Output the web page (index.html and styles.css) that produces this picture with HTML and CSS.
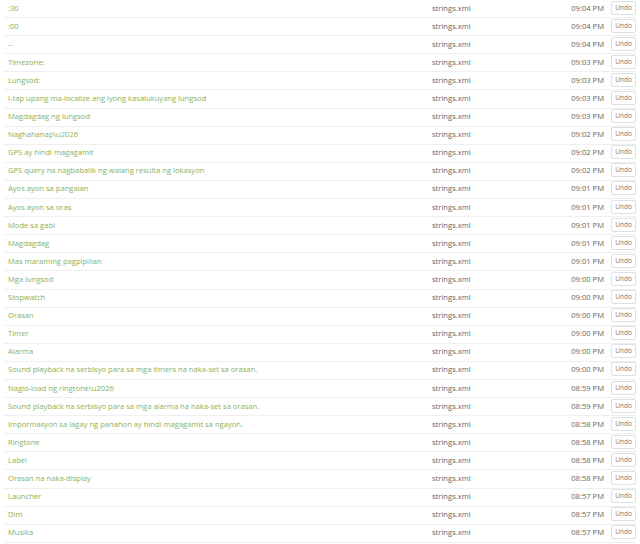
FILE: index.html
```html
<!DOCTYPE html>
<html>
<head lang="en">
    <meta charset="UTF-8">
    <title>History</title>
    <link rel="stylesheet" href="styles.css">
</head>
<body>
<div id="history">
    <div class="row"><span class="name">:30</span><span class="file">strings.xml</span><span class="time">09:04 PM</span><span class="undo">Undo</span></div>
    <div class="row"><span class="name">:00</span><span class="file">strings.xml</span><span class="time">09:04 PM</span><span class="undo">Undo</span></div>
    <div class="row"><span class="name">--</span><span class="file">strings.xml</span><span class="time">09:04 PM</span><span class="undo">Undo</span></div>
    <div class="row"><span class="name">Timezone:</span><span class="file">strings.xml</span><span class="time">09:03 PM</span><span class="undo">Undo</span></div>
    <div class="row"><span class="name">Lungsod:</span><span class="file">strings.xml</span><span class="time">09:03 PM</span><span class="undo">Undo</span></div>
    <div class="row"><span class="name">I-tap upang ma-localize ang iyong kasalukuyang lungsod</span><span class="file">strings.xml</span><span class="time">09:03 PM</span><span class="undo">Undo</span></div>
    <div class="row"><span class="name">Magdagdag ng lungsod</span><span class="file">strings.xml</span><span class="time">09:03 PM</span><span class="undo">Undo</span></div>
    <div class="row"><span class="name">Naghahanap\u2026</span><span class="file">strings.xml</span><span class="time">09:02 PM</span><span class="undo">Undo</span></div>
    <div class="row"><span class="name">GPS ay hindi magagamit</span><span class="file">strings.xml</span><span class="time">09:02 PM</span><span class="undo">Undo</span></div>
    <div class="row"><span class="name">GPS query na nagbabalik ng walang resulta ng lokasyon</span><span class="file">strings.xml</span><span class="time">09:02 PM</span><span class="undo">Undo</span></div>
    <div class="row"><span class="name">Ayos ayon sa pangalan</span><span class="file">strings.xml</span><span class="time">09:01 PM</span><span class="undo">Undo</span></div>
    <div class="row"><span class="name">Ayos ayon sa oras</span><span class="file">strings.xml</span><span class="time">09:01 PM</span><span class="undo">Undo</span></div>
    <div class="row"><span class="name">Mode sa gabi</span><span class="file">strings.xml</span><span class="time">09:01 PM</span><span class="undo">Undo</span></div>
    <div class="row"><span class="name">Magdagdag</span><span class="file">strings.xml</span><span class="time">09:01 PM</span><span class="undo">Undo</span></div>
    <div class="row"><span class="name">Mas maraming pagpipilian</span><span class="file">strings.xml</span><span class="time">09:01 PM</span><span class="undo">Undo</span></div>
    <div class="row"><span class="name">Mga lungsod</span><span class="file">strings.xml</span><span class="time">09:00 PM</span><span class="undo">Undo</span></div>
    <div class="row"><span class="name">Stopwatch</span><span class="file">strings.xml</span><span class="time">09:00 PM</span><span class="undo">Undo</span></div>
    <div class="row"><span class="name">Orasan</span><span class="file">strings.xml</span><span class="time">09:00 PM</span><span class="undo">Undo</span></div>
    <div class="row"><span class="name">Timer</span><span class="file">strings.xml</span><span class="time">09:00 PM</span><span class="undo">Undo</span></div>
    <div class="row"><span class="name">Alarma</span><span class="file">strings.xml</span><span class="time">09:00 PM</span><span class="undo">Undo</span></div>
    <div class="row"><span class="name">Sound playback na serbisyo para sa mga timers na naka-set sa orasan.</span><span class="file">strings.xml</span><span class="time">09:00 PM</span><span class="undo">Undo</span></div>
    <div class="row"><span class="name">Naglo-load ng ringtone\u2026</span><span class="file">strings.xml</span><span class="time">08:59 PM</span><span class="undo">Undo</span></div>
    <div class="row"><span class="name">Sound playback na serbisyo para sa mga alarma na naka-set sa orasan.</span><span class="file">strings.xml</span><span class="time">08:59 PM</span><span class="undo">Undo</span></div>
    <div class="row"><span class="name">Impormasyon sa lagay ng panahon ay hindi magagamit sa ngayon.</span><span class="file">strings.xml</span><span class="time">08:58 PM</span><span class="undo">Undo</span></div>
    <div class="row"><span class="name">Ringtone</span><span class="file">strings.xml</span><span class="time">08:58 PM</span><span class="undo">Undo</span></div>
    <div class="row"><span class="name">Label</span><span class="file">strings.xml</span><span class="time">08:58 PM</span><span class="undo">Undo</span></div>
    <div class="row"><span class="name">Orasan na naka-display</span><span class="file">strings.xml</span><span class="time">08:58 PM</span><span class="undo">Undo</span></div>
    <div class="row"><span class="name">Launcher</span><span class="file">strings.xml</span><span class="time">08:57 PM</span><span class="undo">Undo</span></div>
    <div class="row"><span class="name">Dim</span><span class="file">strings.xml</span><span class="time">08:57 PM</span><span class="undo">Undo</span></div>
    <div class="row"><span class="name">Musika</span><span class="file">strings.xml</span><span class="time">08:57 PM</span><span class="undo">Undo</span></div>
</div>
</body>
</html>
```

FILE: styles.css
```css
*{
    margin: 0;
    padding: 0;
    box-sizing: border-box;
}
body{
    background-color: #fff;
    font-family: "Open Sans", sans-serif;
    font-size: 7.6px;
}
#history{
    padding: 0 4px;
}
.row{
    display: flex;
    align-items: center;
    height: 18.1px;
    padding-bottom: 2px;
    border-bottom: 1px solid #efefef;
    padding-left: 4px;
}
.name{
    flex: 1;
    color: #89b05a;
    white-space: nowrap;
    overflow: hidden;
}
.file{
    width: 122px;
    color: #666;
}
.time{
    width: 50px;
    text-align: right;
    color: #666;
}
.undo{
    margin-left: 7px;
    width: 25px;
    height: 14px;
    border: 1px solid #e0e0e0;
    border-radius: 2px;
    color: #777;
    font-size: 6.5px;
    line-height: 12px;
    text-align: center;
}
```
